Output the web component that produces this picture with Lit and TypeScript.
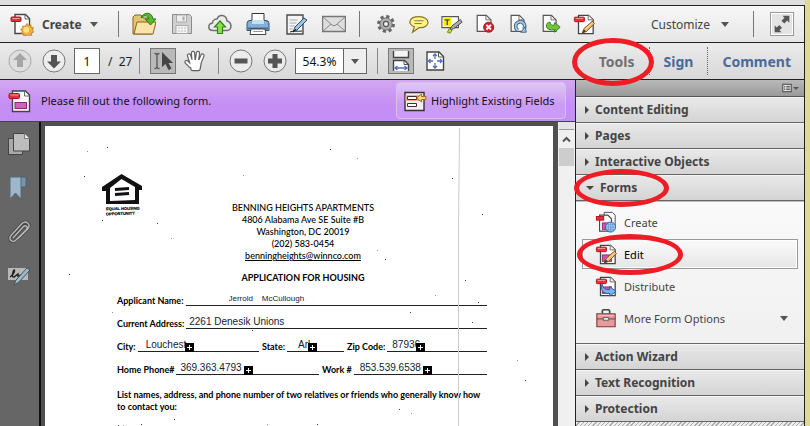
import { LitElement, html, svg, css, type TemplateResult } from "lit";
import { customElement, property } from "lit/decorators.js";

const page = svg`<path d="M6 2.5h11l5 5v15H6z" fill="#fff" stroke="#444" stroke-width="1.4"/><path d="M16.500 2.500v5h5.500" fill="#f4f4f4" stroke="#666"/>`;
const redTag = svg`<rect x="1.500" y="4.500" width="11" height="5" rx="1" fill="#e8303c" stroke="#b0101c"/><path d="M3 6h8" stroke="#ff9a9a"/>`;
const pencil = svg`<path d="M10 22l2-5 9-8 2.500 2.500-8.500 8.500z" fill="#f3b765" stroke="#7a4a1c"/><path d="M13 18l8-7" stroke="#ffe2a8"/><path d="M10 22l2-4 2 2z" fill="#333"/>`;
const pinkBox = svg`<rect x="8" y="13" width="10" height="7" fill="#cc55aa" stroke="#8c2878"/>`;
const handShape = svg`<path d="M8 12.500L6 6.500M10.500 11L10 4M14 11l1-7M17 12.500l2.500-6M7.500 17L3.500 13M8 12h9l-1.500 8h-6z" stroke-linecap="round" stroke-linejoin="round"/>`;

const ICONS: Record<string, TemplateResult | unknown> = {
  createPdf: svg`<path d="M5 2.500h10.500l4 4v15H5z" fill="#fff" stroke="#444" stroke-width="1.400"/><path d="M15 2.500v4.500h4.500" fill="none" stroke="#666"/><rect x="1" y="5" width="10" height="4.500" rx="1" fill="#e8303c" stroke="#b0101c"/><path d="M2.500 6.500h7" stroke="#ff9a9a"/><path d="M17 11.500l1.500 2 2.400-.8.2 2.500 2.400.6-1.100 2.200 1.500 1.900-2.300 1 .2 2.400-2.500-.3-1.300 2-1.800-1.700-2.300 1-.4-2.400-2.400-.5 1.100-2.100-1.500-2 2.200-.9-.2-2.400 2.500.4z" fill="#f0b040" stroke="#b87818" stroke-width=".8"/><circle cx="16.300" cy="17.800" r="3" fill="#ffdf80"/>`,
  folder: svg`<path d="M1 22V5l2-2h6l2 3h9v16z" fill="#e4c473" stroke="#846522"/><path d="M2 22l3-12h19l-3 12z" fill="#f9e3a8" stroke="#846522"/><path d="M9 6C11 0 20-1 21 7h3l-5.500 6L13 7h3.500C16 3 12 3 9 6z" fill="#55b82e" stroke="#2b7a12"/>`,
  save: svg`<path d="M2.500 2.500h17l2 2v17h-19z" fill="#d0d0d0" stroke="#8b8b8b"/><path d="M6.500 3h10v7h-10z" fill="#eee" stroke="#aaa"/><path d="M12.500 4.500h2v4h-2z" fill="#aaa"/><path d="M6 13.500h12v8H6z" fill="#f5f5f5" stroke="#aaa"/><path d="M8 16h8M8 19h8" stroke="#bbb" stroke-dasharray="2 1"/>`,
  cloud: svg`<path d="M5 18.500C-.5 18.500-.5 12 4.500 11 4.500 7 9 7 9 7c2-5.500 9.500-4.500 10 2 5 1 5.500 9.500 0 9.500z" fill="#ececec" stroke="#707070" stroke-width="1.500"/><path d="M9.500 21.500v-6.500H6.500l5.500-6 5.500 6H14.500v6.500z" fill="#8be04f" stroke="#35821b" stroke-width="1.200"/>`,
  print: svg`<path d="M6 1.500h12V11H6z" fill="#fff" stroke="#333"/><path d="M4 8.500h16q3 0 3 3v7H1v-7q0-3 3-3z" fill="#85afd6" stroke="#35536f"/><path d="M2 15.500h20v2H2z" fill="#486d90"/><path d="M6 8h12v4H6z" fill="#c5dff2"/><path d="M5 17h14l1 5.500H4z" fill="#fff" stroke="#444"/><path d="M7 19.500h10" stroke="#999"/>`,
  signDoc: svg`<path d="M3 3h16v19H3z" fill="#f4f4f4" stroke="#4a4a4a" stroke-width="1.400"/><path d="M5.500 8h8M5.500 11h7M5.500 14h5M5.500 17h3" stroke="#aaa"/><path d="M9 20l2-5 9-9 3 2-10 10z" fill="#9bc4e4" stroke="#2c4b69"/><path d="M9 20l3-3M6 20c5-2 7 0 12-1" fill="none" stroke="#222"/>`,
  mail: svg`<path d="M.500 4.500h23v15H.500z" fill="#dedede" stroke="#777" stroke-width="1.400"/><path d="M1 5l9 8q2 1.500 4 0l9-8M1 19l8-7M23 19l-8-7" fill="none" stroke="#888"/>`,
  gear: svg`<circle cx="12" cy="12" r="8" fill="none" stroke="#666" stroke-width="3.500" stroke-dasharray="3.400 2.883"/><circle cx="12" cy="12" r="6.700" fill="#b0b0b0" stroke="#666"/><circle cx="12" cy="12" r="2.800" fill="#eee" stroke="#555" stroke-width="1.300"/>`,
  comment: svg`<path d="M12 4c13 0 13 12 1 12h-1l-7 5 2-6C-1 12 1 4 12 4z" fill="#fff48a" stroke="#8a7624" stroke-width="1.300"/><path d="M7 8.500h10M7 11.500h8" stroke="#77704a"/>`,
  highlight: svg`<path d="M1 4h18v12H1z" fill="#fff" stroke="#555" stroke-width="1.200"/><path d="M2.500 5.500h8.500v9H2.500z" fill="#fff200"/><path d="M4 7.500h5.500M6.800 7.500v5.500" stroke="#444" stroke-width="1.500"/><path d="M9 19l3-5 9-7 2 3-9 7z" fill="#aaa" stroke="#444"/><path d="M7 21l2-4 3 2-2 3z" fill="#c9d92c" stroke="#718014"/>`,
  deletePage: svg`<path d="M3.500 2.500h10l5 5V20h-15z" fill="#fff" stroke="#555" stroke-width="1.300"/><path d="M13 2.500v5h5" fill="none" stroke="#666"/><circle cx="16" cy="15.500" r="5.500" fill="#d91f2c" stroke="#9c1018"/><path d="M13.500 13l5 5m0-5l-5 5" stroke="#fff" stroke-width="2"/>`,
  rotatePage: svg`<path d="M4.500 2.500h9l5 5V20h-14z" fill="#fff" stroke="#555" stroke-width="1.300"/><path d="M13 2.500v5h5" fill="none" stroke="#666"/><path d="M12 19a5 5 0 1 1 6-1" fill="none" stroke="#43607c" stroke-width="4"/><path d="M12 19a5 5 0 1 1 6-1" fill="none" stroke="#9ec7e8" stroke-width="2"/><path d="M15 21l6 0-1-6z" fill="#9ec7e8" stroke="#43607c"/>`,
  exportPage: svg`<path d="M3.500 2.500h9l5 5V20h-14z" fill="#fff" stroke="#555" stroke-width="1.300"/><path d="M12 2.500v5h5" fill="none" stroke="#666"/><path d="M7 14c0 4 4 5 9 4v3l6-5.500-6-5V13c-3 1-5 0-5-3-2 0-4 1-4 4z" fill="#6cc83a" stroke="#2b7a12"/>`,
  editPdf: svg`${page}${redTag}${pencil}`,
  expand: svg`<path d="M12.500 3H20v7.500l-2.300-2.300-3.200 3.200-3-3 3.200-3.200zM4 13.500l2.300 2.300 2.700-2.700 3 3-2.700 2.700L11.500 21H4z" fill="#555"/>`,
  up: svg`<circle cx="12" cy="12" r="11" fill="#dedede" stroke="#aaa"/><path d="M12 4l7 7h-4v7H9v-7H5z" fill="#a5a5a5"/>`,
  down: svg`<circle cx="12" cy="12" r="11" fill="#eee" stroke="#777"/><path d="M12 19.500l-7-7h4V6h6v6.500h4z" fill="#555"/>`,
  minus: svg`<circle cx="12" cy="12" r="11" fill="#ececec" stroke="#777"/><path d="M5.500 9.500h13v5h-13z" fill="#555"/>`,
  plus: svg`<circle cx="12" cy="12" r="11" fill="#ececec" stroke="#777"/><path d="M5 9.500h4.500V5h5v4.500H19v5h-4.500V19h-5v-4.500H5z" fill="#555"/>`,
  select: svg`<path d="M3.500 4.500q2.500 0 2.500 1.500v12q0 1.500-2.500 1.500M8.500 4.500Q6 4.500 6 6M8.500 19.500Q6 19.500 6 18" fill="none" stroke="#555" stroke-width="1.300"/><path d="M11 3v15l3.500-3 3 6 3-1.500-3-5.500H22z" fill="#454545"/>`,
  hand: svg`<g fill="#606060" stroke="#606060" stroke-width="4.400">${handShape}</g><g fill="#fff" stroke="#fff" stroke-width="2">${handShape}</g>`,
  fitWidth: svg`<path d="M4.500 2v6.500h15V2" fill="#f5f5f5" stroke="#444" stroke-width="1.400"/><path d="M4.500 22V11.500h11l4 4V22" fill="#fff" stroke="#444" stroke-width="1.400"/><path d="M15 11.500v4h4" fill="none" stroke="#555"/><path d="M6 19h12M8.500 17L6 19l2.500 2M15.500 17l2.500 2-2.500 2" fill="none" stroke="#5070b8" stroke-width="1.300"/>`,
  fitPage: svg`<path d="M4 3h12l4.500 4.500V21H4z" fill="#fff" stroke="#444" stroke-width="1.400"/><path d="M15.500 3v5h5" fill="none" stroke="#555"/><path d="M12 5v5M12 14v5M5.500 12H10M14 12h5M10 7l2-2 2 2M10 17l2 2 2-2M7.500 10l-2 2 2 2M17 10l2 2-2 2" fill="none" stroke="#5070b8" stroke-width="1.300"/>`,
  formPdf: svg`<path d="M4.500 2h13l4 4v16.500h-17z" fill="#fff" stroke="#444" stroke-width="1.400"/><path d="M16.500 2v5h5" fill="none" stroke="#666"/><rect x="1" y="4.500" width="10.500" height="5" rx="1" fill="#e8303c" stroke="#b0101c"/><path d="M2.500 6h8" stroke="#ff9a9a"/><rect x="7" y="13.500" width="11.500" height="6" fill="#cc66b4" stroke="#8c2878"/>`,
  fields: svg`<path d="M2 3.500h19v18H2z" fill="#f6eeee" stroke="#333" stroke-width="1.400"/><path d="M2.500 6h15v6h-15z" fill="#f4aaa0"/><path d="M4.500 7.500h9v3h-9zM4.500 14.500h9v3h-9z" fill="#fff" stroke="#333"/><path d="M13.500 9l5-4v2.500H23v3h-4.500V13z" fill="#ffd578" stroke="#a76714"/>`,
  pages: svg`<path d="M1.500 6.500h14v16h-14z" fill="#aaa" stroke="#444"/><path d="M6.500 1.500h11l5 5V19h-16z" fill="#bdbdbd" stroke="#444"/><path d="M17.500 1.500v5h5" fill="#eee" stroke="#777"/>`,
  bookmark: svg`<path d="M13 1h6v10h-6z" fill="#7795aa" stroke="#4b6273"/><path d="M3 1h11v22l-5.500-6L3 23z" fill="#9eb8ca" stroke="#516a7c"/>`,
  clip: svg`<path d="M6 18L16.500 6.500c2-2 5 .500 3 3L9 20c-3.500 3.500-8-.500-5-4.500L15 3.500c4-3.500 9 .500 6 5L11 18.500" fill="none" stroke="#444" stroke-width="3"/><path d="M6 18L16.500 6.500c2-2 5 .500 3 3L9 20c-3.500 3.500-8-.500-5-4.500L15 3.500c4-3.500 9 .500 6 5L11 18.500" fill="none" stroke="#bbb" stroke-width="1.400"/>`,
  sign: svg`<path d="M1 4h20v12H1z" fill="#b8b8b8"/><path d="M3 13c5-3 5-8 4-7s-3 8 0 7l4-3v2l4-1" fill="none" stroke="#222" stroke-width="1.400"/><path d="M7 21l2-5L20 4l3 2-11 12z" fill="#9db9cc" stroke="#455"/>`,
  formCreate: svg`<path d="M10 1.500h9l3 3V17H10z" fill="#fff" stroke="#444"/><path d="M5 4.500h9l4 4V22H5z" fill="#fff" stroke="#444" stroke-width="1.200"/><rect x="1.500" y="6" width="8" height="4" fill="#e8303c" stroke="#b0101c"/>${pinkBox}<circle cx="17" cy="17.500" r="5.500" fill="#a8d0f8" stroke="#2c62a8"/><path d="M11.500 17.500h11M17 12v11M13 14.500h8M13 20.500h8M14.500 13v9M19.500 13v9" stroke="#4a86c8" stroke-width=".6"/>`,
  formEdit: svg`${page}${redTag}${pinkBox}${pencil}`,
  formSend: svg`${page}${redTag}${pinkBox}<path d="M8 9c0 6 3 7 8 7v-3.500l7 5.500-7 5v-3C9 21 5 16 8 9z" fill="#78b4ec" stroke="#255a9c"/>`,
  toolbox: svg`<path d="M8 7V4.500q0-1.500 1.500-1.500h5q1.500 0 1.500 1.500V7" fill="none" stroke="#444" stroke-width="1.800"/><path d="M2 7.500h20v14H2z" fill="#e69a9a" stroke="#803838" stroke-width="1.200"/><path d="M2 13h20" stroke="#803838"/><path d="M3 9h18" stroke="#f8c8c8"/><path d="M9 11.500h6v3H9z" fill="#eee" stroke="#555"/>`,
  menu: svg`<path d="M2 3h20v18H2z" fill="#eee" stroke="#444" stroke-width="2.500"/><path d="M5 8h3M10 8h9M5 12h3M10 12h9M5 16h3M10 16h9" stroke="#333" stroke-width="2"/>`,
};

const icon = (name: string) =>
  html`<svg class="icon" viewBox="0 0 24 24" aria-hidden="true">${ICONS[name]}</svg>`;

const iconStyles = css`
  .icon { display: block; width: 24px; height: 24px; flex: none; }
  button { font: inherit; color: inherit; margin: 0; padding: 0; border: 0; background: none; display: flex; align-items: center; }
  .caret { width: 0; height: 0; border: 4px solid transparent; border-top: 5px solid #555; border-bottom: 0; flex: none; }
`;

@customElement("red-ring")
class RedRing extends LitElement {
  static styles = css`
    :host { position: absolute; pointer-events: none; z-index: 5; box-sizing: border-box; border: 5px solid #ee1c24; border-radius: 50%; }
  `;
  render() { return html``; }
}

@customElement("top-toolbar")
class TopToolbar extends LitElement {
  static styles = [iconStyles, css`
    :host { display: flex; align-items: center; height: 36px; padding: 0 10px; background: linear-gradient(#f7f7f7, #e6e6e6); border-bottom: 1px solid #222; color: #444; font-size: 12px; }
    .create { gap: 8px; font-weight: 700; width: 108px; }
    .sep { width: 1px; height: 26px; background: #777; flex: none; }
    .group { display: flex; }
    .files { padding: 0 6px; }
    .files button { width: 38px; justify-content: center; }
    .edits { padding-left: 9px; flex: 1; }
    .edits button { width: 33px; justify-content: center; }
    .edits .icon { width: 22px; height: 22px; }
    .custom { gap: 11px; padding-right: 24px; }
    .full { margin-left: 16px; width: 24px; height: 24px; border: 1px solid #999; background: #e4e4e4; justify-content: center; box-shadow: inset 0 0 0 1px #fff; }
    .full .icon { width: 22px; height: 22px; }
  `];
  render() {
    const files = [["folder", "Open"], ["save", "Save"], ["cloud", "Upload"], ["print", "Print"], ["signDoc", "Sign"], ["mail", "Email"]];
    const edits = [["gear", "Settings"], ["comment", "Comment"], ["highlight", "Highlight"], ["deletePage", "Delete page"], ["rotatePage", "Rotate page"], ["exportPage", "Export page"], ["editPdf", "Edit document"]];
    const btn = ([i, l]: string[]) => html`<button aria-label=${l}>${icon(i)}</button>`;
    return html`
      <button class="create">${icon("createPdf")}<span>Create</span><span class="caret"></span></button>
      <span class="sep"></span>
      <div class="group files">${files.map(btn)}</div>
      <span class="sep"></span>
      <div class="group edits">${edits.map(btn)}</div>
      <button class="custom"><span>Customize</span><span class="caret"></span></button>
      <span class="sep"></span>
      <button class="full" aria-label="Full screen">${icon("expand")}</button>
    `;
  }
}

@customElement("nav-toolbar")
class NavToolbar extends LitElement {
  static styles = [iconStyles, css`
    :host { display: flex; align-items: center; height: 36px; padding-left: 8px; background: linear-gradient(#ebebeb, #d8d8d8); border-bottom: 1px solid #222; color: #222; font-size: 12px; }
    .down { margin-left: 10px; }
    input { box-sizing: border-box; font: inherit; color: #111; height: 26px; border: 1px solid #666; background: #fff; padding: 0; text-align: center; }
    .num { width: 26px; margin: 0 8px; }
    .sep { width: 1px; height: 26px; background: #888; flex: none; }
    .total { width: 31px; }
    .tool { width: 26px; height: 26px; justify-content: center; }
    .on { background: #b9b9b9; box-shadow: inset 0 0 0 1px #777; }
    .pick { margin-left: 10px; }
    .grab { margin: 0 10px 0 6px; }
    .out { margin-left: 10px; }
    .in { margin: 0 8px 0 10px; }
    .zoom { width: 49px; }
    .drop { width: 23px; height: 26px; box-sizing: border-box; justify-content: center; border: 1px solid #666; border-left: 0; background: #eee; margin-right: 10px; }
    .fit { margin: 0 8px 0 10px; }
    .tabs { display: flex; align-items: center; margin-left: auto; padding-right: 13px; font-size: 14px; font-weight: 700; color: #4a6a9c; }
    .tab { height: 28px; padding: 0 14px; position: relative; border-right: 1px dotted #666; }
    .tab:last-child { padding-right: 0; border: 0; }
    .active { color: #707070; }
    red-ring { width: 82px; height: 48px; left: -13px; top: -9px; }
  `];
  render() {
    return html`
      <button aria-label="Previous page">${icon("up")}</button>
      <button class="down" aria-label="Next page">${icon("down")}</button>
      <input class="num" aria-label="Page number" value="1" />
      <span class="total">/&nbsp; 27</span>
      <span class="sep"></span>
      <button class="tool on pick" aria-label="Select">${icon("select")}</button>
      <button class="tool grab" aria-label="Hand">${icon("hand")}</button>
      <span class="sep"></span>
      <button class="out" aria-label="Zoom out">${icon("minus")}</button>
      <button class="in" aria-label="Zoom in">${icon("plus")}</button>
      <input class="zoom" aria-label="Zoom" value="54.3%" />
      <button class="drop" aria-label="Zoom levels"><span class="caret"></span></button>
      <span class="sep"></span>
      <button class="tool on fit" aria-label="Fit width">${icon("fitWidth")}</button>
      <button class="tool" aria-label="Fit page">${icon("fitPage")}</button>
      <div class="tabs">
        <button class="tab active">Tools<red-ring></red-ring></button>
        <button class="tab">Sign</button>
        <button class="tab">Comment</button>
      </div>
    `;
  }
}

interface Field { label: string; value: string; share: number; pad: number; plus?: number; small?: boolean; }

const ROWS: Field[][] = [
  [{ label: "Applicant Name:", value: "Jerrold    McCullough", share: 1, pad: 43, small: true }],
  [{ label: "Current Address:", value: "2261 Denesik Unions", share: 1, pad: 3 }],
  [
    { label: "City:", value: "Louchest", share: 142, pad: 8, plus: 47 },
    { label: "State:", value: "Arl", share: 82, pad: 11, plus: 21 },
    { label: "Zip Code:", value: "87936", share: 140, pad: 5, plus: 29 },
  ],
  [
    { label: "Home Phone#", value: "369.363.4793", share: 202, pad: 4, plus: 68 },
    { label: "Work #", value: "853.539.6538", share: 165, pad: 6, plus: 69 },
  ],
];

const SPECKS = [[42, 25], [39, 50], [62, 21], [198, 49], [57, 94], [112, 97], [126, 112], [24, 148], [285, 23], [312, 32], [407, 52], [437, 88], [332, 124], [340, 133], [420, 154], [390, 169], [433, 176], [365, 186], [67, 186], [427, 196], [207, 204], [472, 234], [480, 254], [354, 283], [366, 287], [129, 293], [96, 298], [222, 298], [272, 298], [73, 299], [78, 299]];

@customElement("form-page")
class FormPage extends LitElement {
  static styles = css`
    :host { display: block; position: relative; overflow: hidden; background: #fff; color: #000; font: 700 9px/12px Lato, "Liberation Sans", sans-serif; padding: 48px 66px 0 72px; }
    .scan { position: absolute; left: 0; top: 0; width: 508px; height: 300px; pointer-events: none; z-index: 2; }
    .logo { position: absolute; left: 56px; top: 48px; width: 42px; height: 44px; overflow: visible; }
    .logotext { font: 700 4px "Liberation Sans", sans-serif; stroke: #111; stroke-width: .2; }
    header { text-align: center; padding: 28px 0 0 2px; }
    header p { font-weight: 500; }
    p { margin: 0; }
    a { color: inherit; }
    h1 { margin: 10px 0 0; font: inherit; text-align: center; }
    .rows { display: flex; flex-direction: column; gap: 7px; margin-top: 7px; }
    .row { display: flex; gap: 3px; }
    .field { display: flex; gap: 2px; align-items: flex-end; height: 16px; flex-basis: 0; min-width: 0; }
    label { white-space: nowrap; }
    .line { position: relative; flex: 1; height: 12px; margin-bottom: 1px; border-bottom: 1px solid #222; min-width: 0; }
    input { display: block; box-sizing: border-box; width: 100%; height: 12px; border: 0; background: none; padding: 0; color: #123; font: 10px/12px "Liberation Sans", sans-serif; }
    .small { font-size: 8px; }
    .more { position: absolute; top: 4px; width: 9px; height: 9px; background: #000; }
    .list { margin-top: 13px; margin-right: -16px; }
  `;
  private field(f: Field, key: string) {
    return html`<div class="field" style="flex-grow:${f.share}">
      <label for=${key}>${f.label}</label>
      <span class="line">
        <input id=${key} class=${f.small ? "small" : ""} style="padding-left:${f.pad}px" .value=${f.value} />
        ${f.plus ? html`<svg class="more" style="left:${f.plus}px" viewBox="0 0 9 9"><path d="M4.500 2v5M2 4.500h5" stroke="#fff" /></svg>` : ""}
      </span>
    </div>`;
  }
  render() {
    return html`
      <svg class="scan" viewBox="0 0 508 300" aria-hidden="true">
        <path d="M414.500 2l-1 100v198" fill="none" stroke="#ccc" />
        ${SPECKS.map(([x, y], i) => svg`<rect x=${x} y=${y} width="1" height="1" fill=${i % 3 ? "#444" : "#999"} />`)}
      </svg>
      <svg class="logo" viewBox="0 0 42 44" role="img" aria-label="Equal Housing Opportunity">
        <path d="M1 13L20.500 0 41 12v4h-3v14H5V17H1zM9 14v13l25-1V13L20.500 5z" fill="#111" fill-rule="evenodd" />
        <path d="M14 15.500l14-1M14 20.500l14-1" stroke="#111" stroke-width="3" />
        <text class="logotext" x="5" y="36" transform="rotate(-1 20 36)">EQUAL HOUSING</text>
        <text class="logotext" x="5" y="41" transform="rotate(-2 20 41)">OPPORTUNITY</text>
      </svg>
      <header>
        <p>BENNING HEIGHTS APARTMENTS</p>
        <p>4806 Alabama Ave SE Suite #B</p>
        <p>Washington, DC 20019</p>
        <p>(202) 583-0454</p>
        <p><a href="mailto:benningheights@winnco.com">benningheights@winnco.com</a></p>
        <h1>APPLICATION FOR HOUSING</h1>
      </header>
      <div class="rows">
        ${ROWS.map((r, i) => html`<div class="row">${r.map((f, j) => this.field(f, `f${i}${j}`))}</div>`)}
      </div>
      <p class="list">List names, address, and phone number of two relatives or friends who generally know how<br />to contact you:</p>
    `;
  }
}

@customElement("tools-panel")
class ToolsPanel extends LitElement {
  static styles = [iconStyles, css`
    :host { display: flex; flex-direction: column; border-left: 1px solid #222; background: #d4d4d4; color: #444; min-height: 0; overflow: visible; font-size: 11px; }
    .bar { height: 16px; flex: none; display: flex; justify-content: flex-end; align-items: center; padding-right: 5px; background: linear-gradient(#b9b9b9, #999); border-bottom: 1px solid #555; }
    .bar .icon { width: 10px; height: 10px; }
    .bar button { gap: 1px; }
    .bar .caret { border-width: 3px 3px 0; }
    .head { width: 100%; height: 26px; flex: none; gap: 6px; padding-left: 9px; font-size: 12px; font-weight: 700; background: linear-gradient(#e9e9e9, #d4d4d4); border-bottom: 1px solid #666; position: relative; box-shadow: inset 0 1px #f4f4f4; }
    .tri { width: 0; height: 0; border: 4px solid transparent; border-left: 4px solid #444; border-right: 0; }
    .open .tri { border: 4px solid transparent; border-top: 4px solid #444; border-bottom: 0; }
    .open { padding-left: 10px; }
    .items { background: linear-gradient(#fafafa, #f0f0f0); padding: 6px 6px 10px; border-bottom: 1px solid #666; display: flex; flex-direction: column; gap: 2px; flex: none; box-shadow: inset 0 1px #bbb; }
    .item { position: relative; box-sizing: border-box; width: 100%; height: 30px; padding: 0 9px 0 12px; gap: 7px; border: 1px solid transparent; }
    .item .icon { width: 22px; height: 22px; }
    .item .caret { margin-left: auto; }
    .current { border-color: #999; background: linear-gradient(#fafafa, #e6e6e6); color: #000; box-shadow: inset 0 0 0 1px #fff; }
    .current::before { content: ""; position: absolute; left: 4px; top: 8px; width: 4px; height: 14px; background: radial-gradient(#888 40%, transparent 50%) 0 0 / 2px 2px; }
    .ring-forms { width: 95px; height: 38px; left: -2px; top: -6px; }
    .ring-edit { width: 106px; height: 41px; left: -6px; top: -6px; }
    .rest { flex: 1; background: repeating-linear-gradient(135deg, #eee 0 2px, #aaa 2px 3px); }
  `];
  private head(text: string) {
    return html`<button class="head"><span class="tri"></span>${text}</button>`;
  }
  render() {
    return html`
      <div class="bar"><button aria-label="Panel options">${icon("menu")}<span class="caret"></span></button></div>
      ${["Content Editing", "Pages", "Interactive Objects"].map((t) => this.head(t))}
      <button class="head open"><span class="tri"></span>Forms<red-ring class="ring-forms"></red-ring></button>
      <div class="items">
        <button class="item">${icon("formCreate")}Create</button>
        <button class="item current">${icon("formEdit")}Edit<red-ring class="ring-edit"></red-ring></button>
        <button class="item">${icon("formSend")}Distribute</button>
        <button class="item">${icon("toolbox")}More Form Options<span class="caret"></span></button>
      </div>
      ${["Action Wizard", "Text Recognition", "Protection"].map((t) => this.head(t))}
      <div class="rest"></div>
    `;
  }
}

@customElement("app-root")
class AppRoot extends LitElement {
  @property() message = "Please fill out the following form.";
  static styles = [iconStyles, css`
    :host { display: flex; height: 100vh; overflow: hidden; background: #e0d896; font: 12px "Noto Sans", "Open Sans", sans-serif; }
    .window { flex: 1; min-width: 0; display: flex; flex-direction: column; margin-right: 5px; }
    .strip { height: 5px; background: #dedede; flex: none; }
    .frame { flex: 1; min-height: 0; display: flex; flex-direction: column; border-top: 1px solid #222; border-right: 1px solid #222; }
    top-toolbar, nav-toolbar { flex: none; }
    .body { flex: 1; min-height: 0; display: flex; }
    .main { flex: 1; min-width: 0; display: flex; flex-direction: column; }
    tools-panel { width: 228px; flex: none; }
    .notice { display: flex; align-items: center; height: 42px; flex: none; padding: 0 9px 0 8px; gap: 9px; background: linear-gradient(#d2a8f0, #c58ef5 60%); border-bottom: 1px solid #444; box-sizing: border-box; font-size: 11px; color: #111; }
    .notice p { margin: 0; flex: 1; }
    .show { box-sizing: border-box; width: 170px; height: 37px; padding-left: 6px; gap: 4px; border: 1px solid #d8c0ea; border-radius: 4px; background: linear-gradient(#e0c8f4, #cb9cf5 60%); }
    .work { flex: 1; min-height: 0; display: flex; }
    .rail { width: 39px; flex: none; background: #666; border-right: 2px solid #111; box-sizing: content-box; }
    .rail button { width: 37px; height: 44px; justify-content: center; }
    .canvas { flex: 1; min-width: 0; background: #505050; padding: 4px 5px 0 4px; display: flex; }
    form-page { flex: 1; min-width: 0; }
    .scroll { width: 17px; flex: none; background: #f0f0f0; display: flex; flex-direction: column; align-items: center; }
    .split { width: 15px; height: 7px; border-bottom: 1px solid #999; background: #e4e4e4; }
    .arrow { width: 9px; height: 18px; }
    .thumb { width: 15px; height: 18px; background: #cdcdcd; }
  `];
  render() {
    const rail = [["pages", "Pages"], ["bookmark", "Bookmarks"], ["clip", "Attachments"], ["sign", "Signatures"]];
    return html`
      <div class="window">
        <div class="strip"></div>
        <div class="frame">
          <top-toolbar></top-toolbar>
          <nav-toolbar></nav-toolbar>
          <div class="body">
            <div class="main">
              <div class="notice">
                ${icon("formPdf")}
                <p>${this.message}</p>
                <button class="show">${icon("fields")}Highlight Existing Fields</button>
              </div>
              <div class="work">
                <nav class="rail">${rail.map(([i, l]) => html`<button aria-label=${l}>${icon(i)}</button>`)}</nav>
                <div class="canvas"><form-page></form-page></div>
                <div class="scroll">
                  <span class="split"></span>
                  <svg class="arrow" viewBox="0 0 9 18"><path d="M1 11.500L4.500 8 8 11.500" fill="none" stroke="#555" stroke-width="2" /></svg>
                  <span class="thumb"></span>
                </div>
              </div>
            </div>
            <tools-panel></tools-panel>
          </div>
        </div>
      </div>
    `;
  }
}
